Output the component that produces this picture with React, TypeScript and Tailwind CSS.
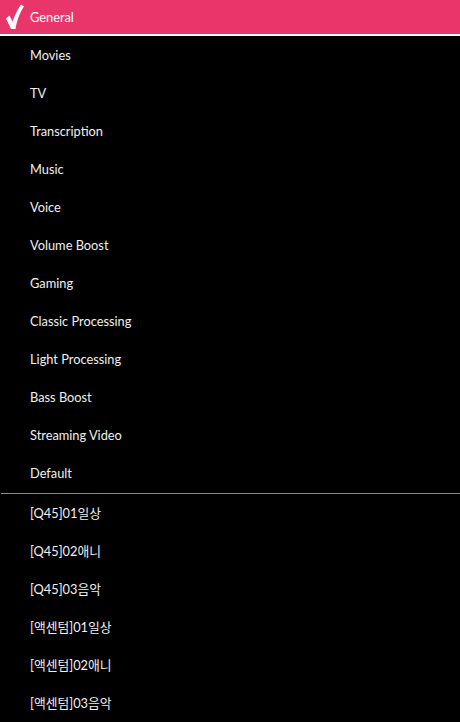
import React from 'react';

const presets = [
  'Movies',
  'TV',
  'Transcription',
  'Music',
  'Voice',
  'Volume Boost',
  'Gaming',
  'Classic Processing',
  'Light Processing',
  'Bass Boost',
  'Streaming Video',
  'Default',
];

const custom = [
  '[Q45]01일상',
  '[Q45]02애니',
  '[Q45]03음악',
  '[액센텀]01일상',
  '[액센텀]02애니',
  '[액센텀]03음악',
];

// white tick on the selected row
const Check = () => (
  <svg width="30" height="34" viewBox="0 0 30 34" className="absolute left-0 top-0">
    <path d="M6 18.5 L9.5 15.5 L12.5 21.5 C15 14.5 18 9 21 4.5 L24 6.5 C20 12 17 20 15.5 29 L11 29 Z" fill="#fff" />
  </svg>
);

const Row = ({ label }: { label: string }) => (
  <div className="h-[38px] flex items-center pl-[30px] pt-[2px] text-[12.8px] text-[#f0f0f0]">{label}</div>
);

export default function App() {
  return (
    <div
      className="w-[460px] h-[722px] bg-black overflow-hidden"
      style={{ fontFamily: 'Lato, "Noto Sans CJK KR", sans-serif' }}
    >
      <div className="relative h-[34px] bg-[#e8356a] flex items-center pl-[30px] pt-[1px] text-[12.8px] text-white">
        <Check />
        General
      </div>
      <div className="h-[2px] bg-white" />
      {presets.map((p) => (
        <Row key={p} label={p} />
      ))}
      <div className="h-px mt-px bg-[#8a8a8a] ml-[1px]" />
      {custom.map((p) => (
        <Row key={p} label={p} />
      ))}
    </div>
  );
}
